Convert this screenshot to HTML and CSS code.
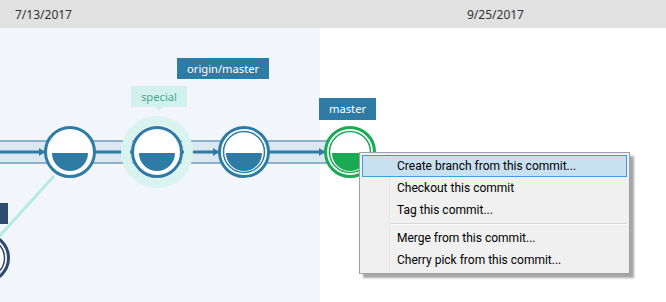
FILE: index.html
```html
<html>
<head>
<link rel="stylesheet" href="styles.css">
</head>
<body>

<div class="timeline-header">
  <span class="date date-first">7/13/2017</span>
  <span class="date">9/25/2017</span>
</div>

<div class="graph">
  <svg class="graph-canvas" width="666" height="274" viewBox="0 28 666 274">
    <!-- branch band -->
    <rect x="-2" y="141" width="332" height="22" fill="#dce8f1" stroke="#8cb0cc" stroke-width="2"/>
    <line x1="0" y1="152" x2="330" y2="152" stroke="#2e7ca6" stroke-width="3"/>

    <!-- merge line from the lower branch -->
    <line x1="54" y1="176" x2="-4" y2="240" stroke="#b3ecdf" stroke-width="3"/>

    <!-- arrows -->
    <path d="M39 148 L45 152 L39 156 Z" fill="#2e7ca6"/>
    <path d="M126 148 L132 152 L126 156 Z" fill="#2e7ca6"/>
    <path d="M213 148 L219 152 L213 156 Z" fill="#2e7ca6"/>
    <path d="M319 148 L325 152 L319 156 Z" fill="#2e7ca6"/>

    <!-- halo for the tagged commit -->
    <circle cx="157" cy="152" r="31.5" fill="none" stroke="#d9f3ee" stroke-width="9"/>

    <!-- commits -->
    <g class="commit">
      <circle cx="70" cy="152" r="24.5" fill="#fff" stroke="#2e7ca6" stroke-width="3"/>
      <path d="M52 153 A18 18 0 0 0 88 153 Z" fill="#2e7ca6"/>
    </g>
    <g class="commit">
      <circle cx="157" cy="152" r="24.5" fill="#fff" stroke="#2e7ca6" stroke-width="3"/>
      <path d="M139 153 A18 18 0 0 0 175 153 Z" fill="#2e7ca6"/>
    </g>
    <g class="commit">
      <circle cx="244" cy="152" r="24.5" fill="#fff" stroke="#2e7ca6" stroke-width="3"/>
      <circle cx="244" cy="152" r="20.5" fill="none" stroke="#2e7ca6" stroke-width="1.5"/>
      <path d="M226 153 A18 18 0 0 0 262 153 Z" fill="#2e7ca6"/>
    </g>
    <g class="commit">
      <circle cx="350" cy="152" r="24.5" fill="#fff" stroke="#1aaa55" stroke-width="3"/>
      <circle cx="350" cy="152" r="20.5" fill="none" stroke="#1aaa55" stroke-width="1.5"/>
      <path d="M332 153 A18 18 0 0 0 368 153 Z" fill="#1aaa55"/>
    </g>

    <!-- lower branch, mostly out of view -->
    <rect x="-4" y="203" width="12" height="21" fill="#2e4a6f"/>
    <circle cx="-15" cy="258" r="23.5" fill="#fff" stroke="#2e4a6f" stroke-width="3"/>
    <circle cx="-15" cy="258" r="19.5" fill="none" stroke="#2e4a6f" stroke-width="1.5"/>
  </svg>

  <div class="ref-label ref-remote" style="left: 177px; top: 30px;">origin/master</div>
  <div class="ref-label ref-tag" style="left: 131px; top: 58px;">special</div>
  <div class="ref-label ref-local" style="left: 319px; top: 70px;">master</div>

  <div class="context-menu">
    <div class="menu-item active">Create branch from this commit...</div>
    <div class="menu-item">Checkout this commit</div>
    <div class="menu-item">Tag this commit...</div>
    <div class="menu-separator"></div>
    <div class="menu-item">Merge from this commit...</div>
    <div class="menu-item">Cherry pick from this commit...</div>
  </div>
</div>

</body>
</html>
```

FILE: styles.css
```css
html, body {
  margin: 0;
  width: 666px;
  height: 302px;
  overflow: hidden;
  font-family: "Noto Sans", "Open Sans", sans-serif;
  background-color: white;
}

.timeline-header {
  display: flex;
  align-items: center;
  height: 28px;
  padding-left: 15px;
  background-color: #e1e1e1;
  color: #333;
  font-size: 12px;
}

.date-first {
  width: 452px;
}

.graph {
  position: relative;
  height: 274px;
  background: linear-gradient(to right, #f2f6fa 320px, white 320px);
}

.graph-canvas {
  display: block;
}

.ref-label {
  position: absolute;
  height: 21px;
  padding: 0 10px;
  font-size: 11.2px;
  line-height: 21px;
  white-space: nowrap;
}

.ref-remote, .ref-local {
  background-color: #2e7ca6;
  color: white;
}

.ref-local {
  height: 22px;
  line-height: 22px;
}

.ref-tag {
  background-color: #d3f1ec;
  color: #45a98c;
}

.ref-tag:after {
  content: "";
  position: absolute;
  left: 50%;
  bottom: -4px;
  margin-left: -4px;
  border-left: 4px solid transparent;
  border-right: 4px solid transparent;
  border-top: 4px solid #d3f1ec;
}

.context-menu {
  position: absolute;
  left: 359px;
  top: 124px;
  width: 265px;
  padding: 2px;
  background: linear-gradient(to right, #f0f0f0 29px, #e3e3e3 29px, #e3e3e3 30px, #fcfcfc 30px, #f0f0f0 31px);
  border: 1px solid #a0a0a0;
  box-shadow: 4px 4px 2px rgba(0, 0, 0, 0.35);
  font-family: Roboto, "Noto Sans", sans-serif;
  font-size: 12px;
  color: #000;
}

.menu-item {
  height: 22px;
  line-height: 21px;
  padding-left: 34px;
  border: 1px solid transparent;
  box-sizing: border-box;
  white-space: nowrap;
}

.menu-item.active {
  background-color: #c8e1f1;
  border-color: #3ba0d8;
}

.menu-separator {
  height: 1px;
  margin: 2px 0 2px 29px;
  background-color: #d7d7d7;
  border-bottom: 1px solid #fcfcfc;
}
```
